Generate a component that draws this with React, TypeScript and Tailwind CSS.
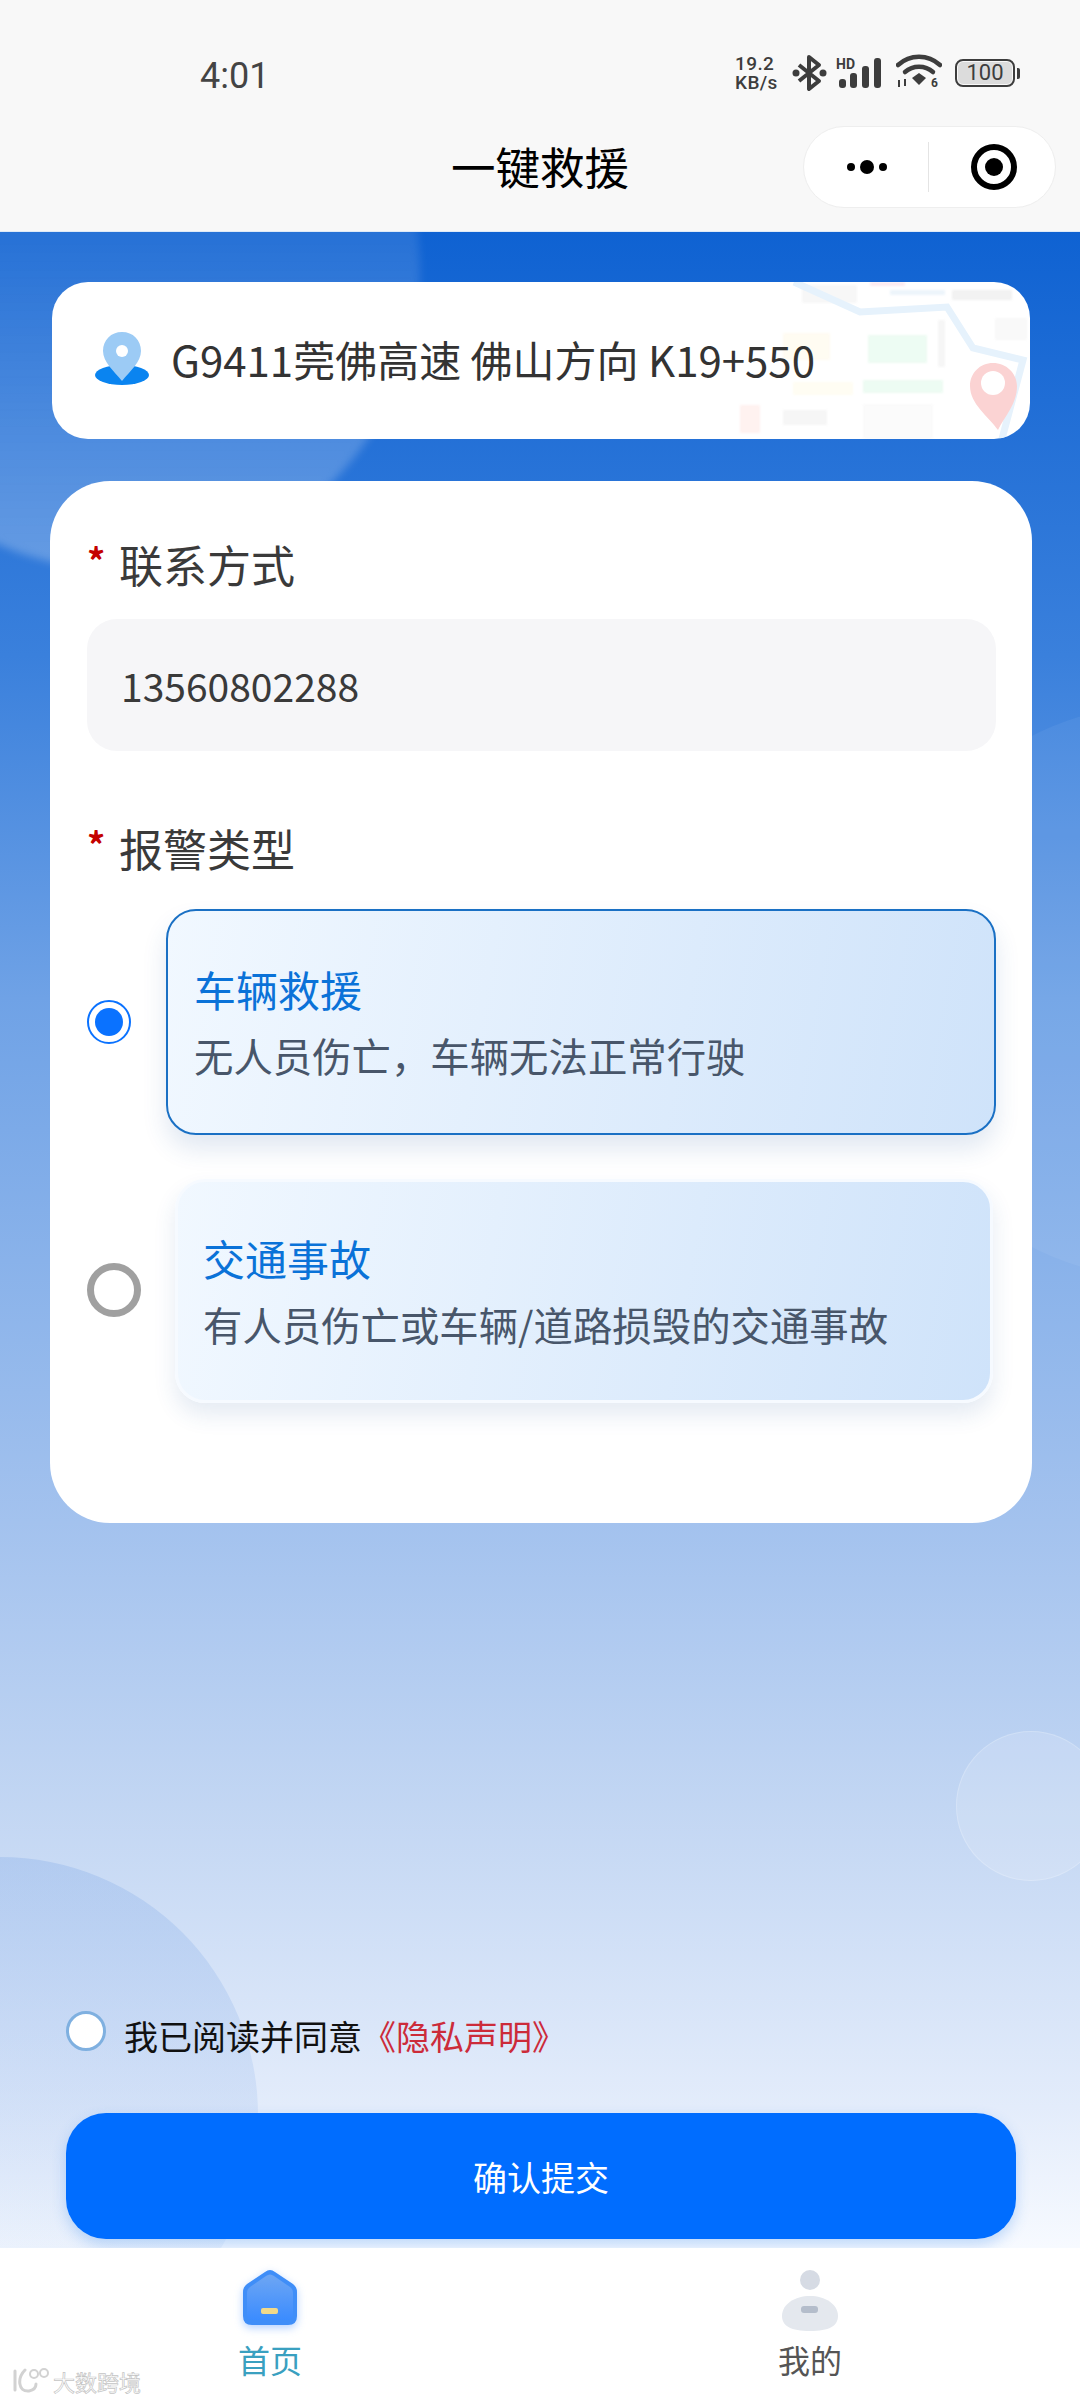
import React from 'react';

const StatusIcons: React.FC = () => (
  <div className="flex items-center">
    <div className="flex flex-col w-[48px] text-[#3d3d3d] font-medium font-['Roboto',sans-serif] text-[19px] leading-[19px] tracking-[0.4px]">
      <span>19.2</span>
      <span>KB/s</span>
    </div>
    <svg className="ml-[9px]" width="36" height="38" viewBox="0 0 36 38" fill="none">
      <path d="M7 11 L27 27 L17 35 V3 L27 11 L7 27" stroke="#3d3d3d" strokeWidth="4" strokeLinejoin="round" />
      <circle cx="4" cy="19" r="3.5" fill="#3d3d3d" />
      <circle cx="31" cy="19" r="3.5" fill="#3d3d3d" />
    </svg>
    <div className="relative ml-[8px] w-[50px] h-[32px]">
      <span className="absolute left-0 top-0 text-[14px] leading-[14px] font-bold text-[#3d3d3d] font-['Roboto',sans-serif]">HD</span>
      <svg className="absolute inset-0" width="50" height="32" viewBox="0 0 50 32">
        <rect x="3" y="22" width="7" height="9" rx="3" fill="#3d3d3d" />
        <rect x="14" y="16" width="7" height="15" rx="3" fill="#3d3d3d" />
        <rect x="26" y="9" width="7" height="22" rx="3" fill="#3d3d3d" />
        <rect x="38" y="1" width="7" height="30" rx="3" fill="#3d3d3d" />
      </svg>
    </div>
    <svg className="ml-[10px]" width="46" height="38" viewBox="0 0 46 38" fill="none">
      <path d="M2 11 C14 0 32 0 44 11" stroke="#3d3d3d" strokeWidth="4.5" strokeLinecap="round" />
      <path d="M9 18 C17 11 29 11 37 18" stroke="#3d3d3d" strokeWidth="4.5" strokeLinecap="round" />
      <path d="M16 24 L23 19 L30 24 L23 31 Z" fill="#3d3d3d" />
      <path d="M3 26 V33 M9 25 V32" stroke="#3d3d3d" strokeWidth="2" />
      <text x="35" y="33" fontSize="12" fontWeight="700" fill="#3d3d3d" fontFamily="Roboto, sans-serif">6</text>
    </svg>
    <div className="ml-[13px] flex items-center">
      <div className="w-[60px] h-[28px] rounded-[8px] border-2 border-[#3d3d3d] p-px flex">
        <span className="flex-1 rounded-[5px] bg-[#dcdcdc] text-center text-[#3d3d3d] text-[22px] leading-[22px] font-['Roboto',sans-serif]">100</span>
      </div>
      <div className="ml-[2px] w-[3px] h-[11px] rounded-r-[2px] bg-[#3d3d3d]" />
    </div>
  </div>
);

const MapArt: React.FC = () => (
  <svg className="absolute inset-0" width="978" height="157" viewBox="0 0 978 157" fill="none">
    <g opacity="0.45" className="blur-[1px]">
      <rect x="750" y="3" width="55" height="18" fill="#eeeeee" />
      <rect x="818" y="0" width="35" height="4" fill="#fbd3e0" />
      <rect x="838" y="8" width="55" height="5" fill="#d8e8f7" />
      <rect x="900" y="8" width="60" height="10" fill="#e2e2e2" />
      <rect x="943" y="36" width="32" height="22" fill="#f1f1f1" />
      <rect x="816" y="53" width="59" height="28" fill="#d8f8e4" />
      <rect x="811" y="98" width="80" height="13" fill="#d8f8e4" />
      <rect x="886" y="38" width="7" height="47" fill="#ececec" />
      <rect x="731" y="51" width="47" height="27" fill="#fff8e2" />
      <rect x="741" y="100" width="60" height="13" fill="#fffbe4" />
      <rect x="688" y="123" width="20" height="28" fill="#ffe2de" />
      <rect x="731" y="128" width="44" height="15" fill="#ebebeb" />
      <rect x="811" y="122" width="70" height="35" fill="#f6f6f6" />
    </g>
    <path d="M742 0 L808 30 L895 25 L921 66 L971 78 L950 157" stroke="#e6f2fc" strokeWidth="7" />
    <path d="M941 81 C954 81 965 91 965 104 C965 122 953 134 946 148 C936 134 918 122 918 104 C918 91 928 81 941 81 Z" fill="#fbd3d3" />
    <circle cx="941" cy="101" r="12" fill="#ffffff" />
  </svg>
);

const PinIcon: React.FC = () => (
  <svg width="56" height="56" viewBox="0 0 56 56" fill="none">
    <ellipse cx="28" cy="44" rx="27" ry="10" fill="#0a84f0" />
    <path d="M28 1 C39 1 47 9 47 20 C47 31 36 40 28 50 C20 40 9 31 9 20 C9 9 17 1 28 1 Z" fill="#9ccbf5" />
    <circle cx="28" cy="20" r="6" fill="#ffffff" />
  </svg>
);

const RequiredLabel: React.FC<{ text: string; className?: string }> = ({ text, className }) => (
  <div className={`flex items-center h-[60px] ${className ?? ''}`}>
    <span className="w-[32px] h-[60px] pt-[6px] text-[#c40000] text-[36px] leading-[36px] font-bold">*</span>
    <span className="text-[44px] leading-[58px] pb-[2px] text-[#3a3a3a]">{text}</span>
  </div>
);

const AlarmCard: React.FC<{ title: string; desc: string; active?: boolean }> = ({ title, desc, active }) => (
  <div
    className={
      active
        ? 'flex-1 h-[226px] rounded-[30px] border-2 border-[#1a70c4] bg-[linear-gradient(100deg,#f1f8ff_0%,#cfe3fa_100%)] shadow-[0_14px_24px_rgba(40,90,160,0.14)] flex flex-col justify-center pl-[26px]'
        : 'flex-1 h-[224px] mr-[3px] rounded-[30px] border-[3px] border-[#f6faff] bg-[linear-gradient(100deg,#f1f8ff_0%,#cfe3fa_100%)] shadow-[0_12px_22px_rgba(40,90,160,0.12)] flex flex-col justify-center pl-[25px]'
    }
  >
    <span className="text-[42px] leading-[56px] text-[#0a72d8]">{title}</span>
    <span className="mt-[10px] text-[39.4px] leading-[56px] text-[#48566a]">{desc}</span>
  </div>
);

const HomeIcon: React.FC = () => (
  <svg width="58" height="58" viewBox="0 0 58 58" fill="none" className="drop-shadow-[0_3px_4px_rgba(40,125,255,0.35)]">
    <defs>
      <linearGradient id="homeFill" x1="0" y1="0" x2="0" y2="1">
        <stop offset="0" stopColor="#6ea6f3" />
        <stop offset="1" stopColor="#3b8cff" />
      </linearGradient>
    </defs>
    <path d="M24 3 Q29 -1 34 3 L52 15 Q56 18 56 23 V47 Q56 56 47 56 H11 Q2 56 2 47 V23 Q2 18 6 15 Z" fill="#3f8ef8" />
    <path d="M25 7 Q29 4 33 7 L49 18 Q52 20 52 24 V45 Q52 51 46 51 H12 Q6 51 6 45 V24 Q6 20 9 18 Z" fill="url(#homeFill)" />
    <rect x="20" y="39" width="17" height="6" rx="2" fill="#f1d98a" />
  </svg>
);

const MineIcon: React.FC = () => (
  <svg width="58" height="62" viewBox="0 0 58 62" fill="none" className="blur-[0.6px]">
    <circle cx="29" cy="11" r="10" fill="#d6dbe4" />
    <path d="M29 27 C44 27 57 35 57 47 C57 57 48 62 29 62 C10 62 1 57 1 47 C1 35 14 27 29 27 Z" fill="#e4e8ee" />
    <rect x="20" y="37" width="17" height="7" rx="3" fill="#b4bdcb" />
  </svg>
);

const App: React.FC = () => {
  return (
    <div className="relative w-[1080px] h-[2400px] flex flex-col overflow-hidden bg-white font-['Noto_Sans_CJK_SC','Noto_Sans',sans-serif]">
      <header className="h-[232px] bg-[#f8f8f8] shrink-0 border-b border-[#dfeaf7]">
        <div className="h-[126px] flex items-start justify-between pt-[54px] pl-[200px] pr-[60px]">
          <span className="text-[36px] leading-[44px] text-[#444444] font-['Roboto',sans-serif]">4:01</span>
          <StatusIcons />
        </div>
        <div className="relative h-[82px] flex items-center justify-center">
          <h1 className="text-[44.5px] leading-[60px] pb-[3px] font-normal text-black">一键救援</h1>
          <div className="absolute right-[24px] top-0 w-[253px] h-[82px] rounded-full bg-white border border-[#eeeeee] flex items-center">
            <div className="w-[124px] flex items-center justify-center gap-[5px] pl-[2px]">
              <span className="w-[8px] h-[8px] rounded-full bg-black" />
              <span className="w-[14px] h-[14px] rounded-full bg-black" />
              <span className="w-[8px] h-[8px] rounded-full bg-black" />
            </div>
            <div className="w-px h-[50px] bg-[#e4e4e4]" />
            <div className="flex-1 flex items-center justify-center pl-[3px]">
              <div className="w-[46px] h-[46px] rounded-full border-[6px] border-black flex items-center justify-center">
                <span className="w-[18px] h-[18px] rounded-full bg-black" />
              </div>
            </div>
          </div>
        </div>
      </header>

      <main className="relative flex-1 flex flex-col overflow-hidden bg-[linear-gradient(180deg,#0f62d2_0%,#3a80dc_21%,#6fa2e6_38%,#a3c2ee_64%,#c2d6f3_78%,#e3ecfb_93%,#f7faff_100%)]">
        {/* background shapes */}
        <div className="absolute left-[-180px] top-[-262px] w-[600px] h-[600px] rounded-full blur-[4px] bg-[linear-gradient(180deg,rgba(255,255,255,0.1)_45%,rgba(255,255,255,0.26)_100%)]" />
        <div className="absolute left-[880px] top-[473px] w-[560px] h-[573px] rounded-full bg-white/5" />
        <div className="absolute left-[-258px] top-[1625px] w-[516px] h-[516px] rounded-full bg-[linear-gradient(180deg,rgba(100,150,225,0.22)_0%,rgba(100,150,225,0.04)_100%)]" />
        <div className="absolute left-[956px] top-[1499px] w-[150px] h-[150px] rounded-full border border-white/20 bg-white/15" />

        <div className="relative mt-[50px] ml-[52px] w-[978px] h-[157px] rounded-[36px] bg-white overflow-hidden flex items-center shrink-0">
          <MapArt />
          <div className="relative flex items-center pl-[42px] pb-[4px]">
            <PinIcon />
            <span className="ml-[21px] text-[42px] leading-[56px] text-[#333333]">G9411莞佛高速 佛山方向 K19+550</span>
          </div>
        </div>

        <section className="relative mt-[42px] ml-[50px] w-[982px] rounded-[60px] bg-white pt-[54px] pb-[120px] pl-[37px] pr-[36px] shrink-0">
          <RequiredLabel text="联系方式" />
          <div className="mt-[24px] h-[132px] rounded-[30px] bg-[#f6f6f8] flex items-center pl-[34px] text-[39px] text-[#3a3a3a]">
            13560802288
          </div>
          <RequiredLabel text="报警类型" className="mt-[68px]" />
          <div className="mt-[30px] flex items-center">
            <div className="w-[44px] h-[44px] rounded-full border-2 border-[#0a72ff] flex items-center justify-center mr-[35px]">
              <span className="w-[28px] h-[28px] rounded-full bg-[#0a72ff]" />
            </div>
            <AlarmCard active title="车辆救援" desc="无人员伤亡，车辆无法正常行驶" />
          </div>
          <div className="mt-[44px] flex items-center">
            <div className="w-[54px] h-[54px] mb-[3px] rounded-full border-[7px] border-[#a0a0a0] mr-[34px]" />
            <AlarmCard title="交通事故" desc="有人员伤亡或车辆/道路损毁的交通事故" />
          </div>
        </section>

        <div className="relative mt-auto pl-[66px] pr-[64px] pb-[9px]">
          <div className="flex items-start">
            <div className="w-[40px] h-[40px] rounded-full bg-white border-[3px] border-[#7fb0e0]" />
            <p className="ml-[18px] text-[34px] leading-[50px] text-[#111111]">
              我已阅读并同意<span className="text-[#cc2b3a]">《隐私声明》</span>
            </p>
          </div>
          <button className="mt-[52px] w-full h-[126px] rounded-[40px] bg-[#006dff] text-white text-[34px] shadow-[0_6px_14px_rgba(60,140,240,0.3)]">
            确认提交
          </button>
        </div>
      </main>

      <nav className="relative h-[152px] shrink-0 bg-white grid grid-cols-2">
        <div className="flex flex-col items-center pt-[21px]">
          <HomeIcon />
          <span className="mt-[10px] text-[32px] leading-[44px] text-[#3aa0c0]">首页</span>
        </div>
        <div className="flex flex-col items-center pt-[21px]">
          <MineIcon />
          <span className="mt-[6px] text-[32px] leading-[44px] text-[#555555]">我的</span>
        </div>
        <div className="absolute left-[10px] bottom-[6px] flex items-center">
          <svg width="40" height="26" viewBox="0 0 40 26" fill="none">
            <path d="M5 3 V22 M15 2 C7 10 8 24 19 23 C24 22 26 19 26 16" stroke="#d2d2d2" strokeWidth="3" strokeLinecap="round" />
            <circle cx="24" cy="6" r="4" stroke="#d2d2d2" strokeWidth="2" />
            <circle cx="34" cy="5" r="4" stroke="#d2d2d2" strokeWidth="2" />
          </svg>
          <span className="ml-[3px] text-[22px] leading-[26px] text-white [-webkit-text-stroke:0.7px_#c4c4c4]">大数跨境</span>
        </div>
      </nav>
    </div>
  );
};

export default App;
